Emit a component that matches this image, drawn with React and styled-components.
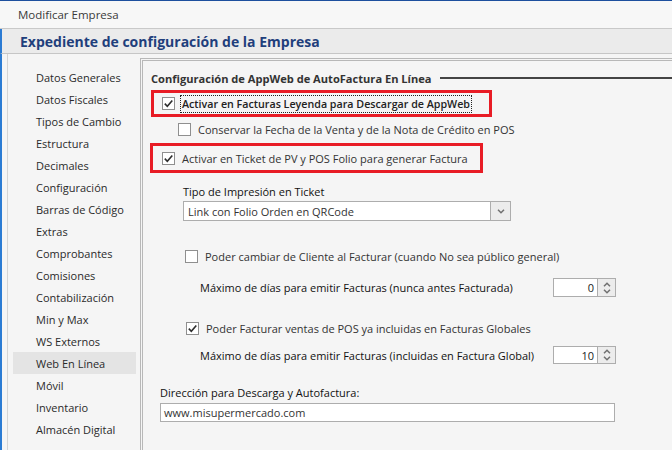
import React from "react";
import styled, { createGlobalStyle } from "styled-components";

const Global = createGlobalStyle`
  html, body { margin: 0; padding: 0; background: #f5f5f5; }
  body { font-family: "Open Sans", "Noto Sans", sans-serif; }
`;

const Window = styled.div`
  width: 672px;
  height: 450px;
  overflow: hidden;
  border-top: 1px solid #1d4f9e;
  box-sizing: border-box;
  background: #f5f5f5;
  display: flex;
  flex-direction: column;
`;

const TitleBar = styled.div`
  height: 27px;
  flex: none;
  display: flex;
  align-items: center;
  padding-left: 18px;
  font-size: 11.5px;
  color: #3a3a3a;
  background: #f7f7f7;
  border-bottom: 1px solid #c9c9c9;
`;

const Header = styled.div`
  height: 24px;
  flex: none;
  display: flex;
  align-items: center;
  padding-left: 18px;
  font-size: 14px;
  font-weight: 700;
  color: #1f3f7c;
  background: #ebebeb;
  border-bottom: 1px solid #c6c6c6;
  border-left: 2px solid #2b7bd3;
`;

const Body = styled.div`
  flex: 1;
  display: flex;
  border-left: 2px solid #2b7bd3;
  min-height: 0;
`;

const Nav = styled.div`
  width: 133px;
  flex: none;
  margin-left: 5px;
  border-left: 1px solid #d4d4d4;
  padding: 12px 0 0 5px;
  box-sizing: border-box;
  display: flex;
  flex-direction: column;
`;

const NavItem = styled.div`
  height: 22px;
  display: flex;
  align-items: center;
  padding-left: 23px;
  margin-right: 4px;
  font-size: 11px;
  color: #2a2a2a;
  background: ${(p) => (p.$active ? "#e4e4e4" : "transparent")};
  box-sizing: border-box;
`;

const Panel = styled.div`
  flex: 1;
  margin-top: 4px;
  border-top: 3px double #b8b8b8;
  border-left: 3px double #b8b8b8;
  padding: 0 0 0 8px;
  display: flex;
  flex-direction: column;
  color: #333;
  font-size: 11px;
`;

const GroupTitle = styled.div`
  margin-top: 7px;
  height: 20px;
  display: flex;
  align-items: center;
  gap: 8px;
  font-weight: 700;
  font-size: 11.1px;
  color: #333;
  white-space: nowrap;
  &::after {
    content: "";
    flex: 1;
    height: 2px;
    background: #444;
  }
`;

const RedBox = styled.div`
  margin-top: ${(p) => p.$mt}px;
  margin-left: ${(p) => p.$ml || 0}px;
  width: ${(p) => p.$w}px;
  height: ${(p) => p.$h}px;
  border: 3px solid #e81c25;
  box-sizing: border-box;
  display: flex;
  align-items: center;
  padding-left: ${(p) => p.$pl || 8}px;
`;

const Row = styled.div`
  margin-top: ${(p) => p.$mt}px;
  padding-left: ${(p) => p.$pl}px;
  height: ${(p) => p.$h || 16}px;
  display: flex;
  align-items: center;
  white-space: nowrap;
`;

const Box = styled.span`
  width: 13px;
  height: 13px;
  flex: none;
  box-sizing: border-box;
  border: 1px solid #8f8f8f;
  background: #fff;
  display: inline-flex;
  align-items: center;
  justify-content: center;
  margin-right: 5px;
`;

const CbLabel = styled.span`
  font-weight: ${(p) => (p.$bold ? 600 : 400)};
  font-size: ${(p) => (p.$bold ? "10.7px" : "11px")};
  color: ${(p) => (p.$bold ? "#222" : "#333")};
  padding: 1px 1px;
  border: 1px ${(p) => (p.$focus ? "dotted #222" : "solid transparent")};
`;

const Label = styled.span`
  color: ${(p) => p.$color || "#222"};
  font-weight: ${(p) => p.$weight || 400};
`;

const Select = styled.div`
  margin-top: 2px;
  margin-left: 32px;
  width: 328px;
  height: 20px;
  box-sizing: border-box;
  border: 1px solid #adadad;
  background: #fff;
  display: flex;
  align-items: stretch;
`;

const SelectText = styled.div`
  flex: 1;
  display: flex;
  align-items: center;
  padding-left: 4px;
  color: #333;
`;

const SideButton = styled.div`
  width: ${(p) => p.$w}px;
  flex: none;
  background: #ececec;
  border-left: 1px solid #adadad;
  display: flex;
  flex-direction: column;
  align-items: center;
  justify-content: center;
`;

const MaxRow = styled.div`
  margin-top: ${(p) => p.$mt}px;
  padding-left: 49px;
  height: ${(p) => p.$h}px;
  display: flex;
  align-items: center;
  white-space: nowrap;
`;

const Spinner = styled.div`
  margin-left: auto;
  margin-right: 56px;
  width: 63px;
  height: 100%;
  box-sizing: border-box;
  border: 1px solid #adadad;
  background: #fff;
  display: flex;
`;

const SpinValue = styled.div`
  flex: 1;
  display: flex;
  align-items: center;
  justify-content: flex-end;
  padding-right: 3px;
  color: #222;
`;

const SpinGap = styled.div`
  height: 2px;
`;

const TextInput = styled.div`
  margin-top: 3px;
  margin-left: 9px;
  width: 455px;
  height: 19px;
  box-sizing: border-box;
  border: 1px solid #adadad;
  background: #fff;
  display: flex;
  align-items: center;
  padding-left: 3px;
  color: #333;
`;

const Check = () => (
  <svg width="11" height="11" viewBox="0 0 11 11">
    <path d="M1.8 5.6 L4.3 8.2 L9.3 2.4" fill="none" stroke="#2d2d2d" strokeWidth="1.6" />
  </svg>
);

const Chevron = ({ up }) => (
  <svg width="8" height="5" viewBox="0 0 8 5">
    <path d={up ? "M1 4.2 L4 1.2 L7 4.2" : "M1 0.8 L4 3.8 L7 0.8"} fill="none" stroke="#707070" strokeWidth="1.5" />
  </svg>
);

const Checkbox = ({ checked, children, bold, focus }) => (
  <>
    <Box>{checked && <Check />}</Box>
    <CbLabel $bold={bold} $focus={focus}>{children}</CbLabel>
  </>
);

const navItems = [
  "Datos Generales", "Datos Fiscales", "Tipos de Cambio", "Estructura", "Decimales",
  "Configuración", "Barras de Código", "Extras", "Comprobantes", "Comisiones",
  "Contabilización", "Min y Max", "WS Externos", "Web En Línea", "Móvil",
  "Inventario", "Almacén Digital",
];

const SpinBox = ({ value }) => (
  <Spinner>
    <SpinValue>{value}</SpinValue>
    <SideButton $w={17}>
      <Chevron up />
      <SpinGap />
      <Chevron />
    </SideButton>
  </Spinner>
);

export default function App() {
  return (
    <>
      <Global />
      <Window>
        <TitleBar>Modificar Empresa</TitleBar>
        <Header>Expediente de configuración de la Empresa</Header>
        <Body>
          <Nav>
            {navItems.map((n) => (
              <NavItem key={n} $active={n === "Web En Línea"}>{n}</NavItem>
            ))}
          </Nav>
          <Panel>
            <GroupTitle>Configuración de AppWeb de AutoFactura En Línea</GroupTitle>
            <RedBox $mt={2} $w={341} $h={27}>
              <Checkbox checked bold focus>Activar en Facturas Leyenda para Descargar de AppWeb</Checkbox>
            </RedBox>
            <Row $mt={4} $pl={27}>
              <Checkbox>Conservar la Fecha de la Venta y de la Nota de Crédito en POS</Checkbox>
            </Row>
            <RedBox $mt={6} $ml={-1} $w={333} $h={30} $pl={9}>
              <Checkbox checked>Activar en Ticket de PV y POS Folio para generar Factura</Checkbox>
            </RedBox>
            <Row $mt={10} $pl={32}>
              <Label $color="#111">Tipo de Impresión en Ticket</Label>
            </Row>
            <Select>
              <SelectText>Link con Folio Orden en QRCode</SelectText>
              <SideButton $w={19}>
                <Chevron />
              </SideButton>
            </Select>
            <Row $mt={27} $pl={34}>
              <Checkbox>Poder cambiar de Cliente al Facturar (cuando No sea público general)</Checkbox>
            </Row>
            <MaxRow $mt={14} $h={19}>
              <Label $color="#111">Máximo de días para emitir Facturas (nunca antes Facturada)</Label>
              <SpinBox value="0" />
            </MaxRow>
            <Row $mt={23} $pl={35}>
              <Checkbox checked>Poder Facturar ventas de POS ya incluidas en Facturas Globales</Checkbox>
            </Row>
            <MaxRow $mt={10} $h={18}>
              <Label $color="#111">Máximo de días para emitir Facturas (incluidas en Factura Global)</Label>
              <SpinBox value="10" />
            </MaxRow>
            <Row $mt={20} $pl={9}>
              <Label $color="#111">Dirección para Descarga y Autofactura:</Label>
            </Row>
            <TextInput>www.misupermercado.com</TextInput>
          </Panel>
        </Body>
      </Window>
    </>
  );
}
